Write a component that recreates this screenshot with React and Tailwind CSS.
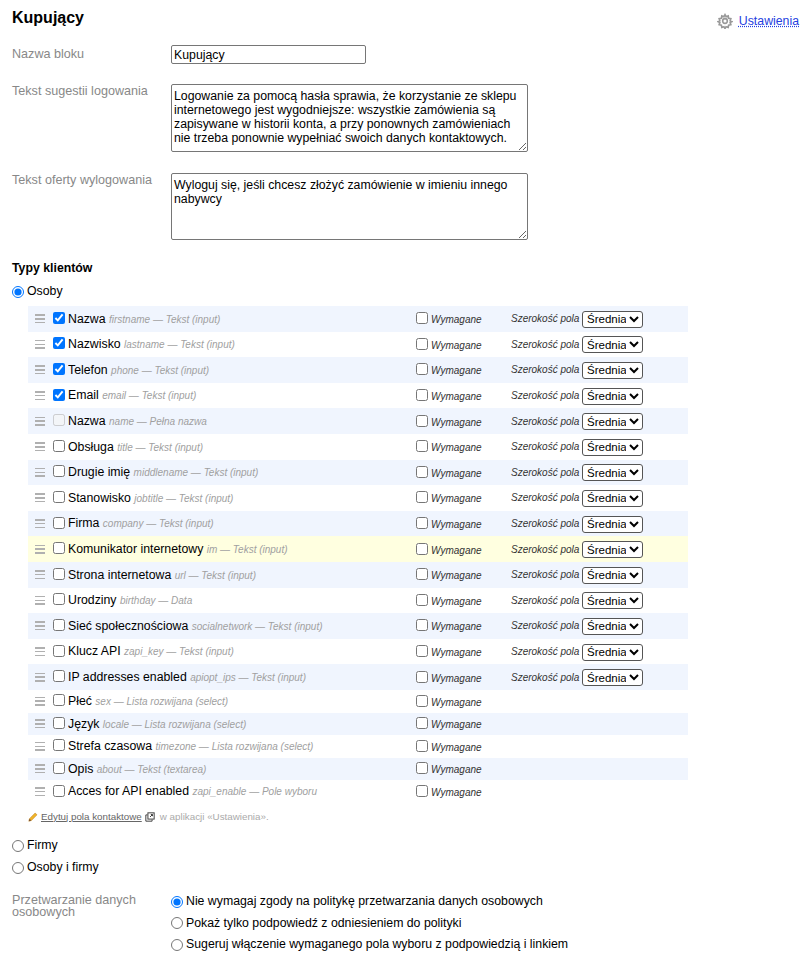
const F = { fontFamily: '"Liberation Sans", Arial, sans-serif' };

const rows = [
  ["Nazwa", "firstname — Tekst (input)", true, true],
  ["Nazwisko", "lastname — Tekst (input)", true, true],
  ["Telefon", "phone — Tekst (input)", true, true],
  ["Email", "email — Tekst (input)", true, true],
  ["Nazwa", "name — Pełna nazwa", false, true, true],
  ["Obsługa", "title — Tekst (input)", false, true],
  ["Drugie imię", "middlename — Tekst (input)", false, true],
  ["Stanowisko", "jobtitle — Tekst (input)", false, true],
  ["Firma", "company — Tekst (input)", false, true],
  ["Komunikator internetowy", "im — Tekst (input)", false, true],
  ["Strona internetowa", "url — Tekst (input)", false, true],
  ["Urodziny", "birthday — Data", false, true],
  ["Sieć społecznościowa", "socialnetwork — Tekst (input)", false, true],
  ["Klucz API", "zapi_key — Tekst (input)", false, true],
  ["IP addresses enabled", "apiopt_ips — Tekst (input)", false, true],
  ["Płeć", "sex — Lista rozwijana (select)", false, false],
  ["Język", "locale — Lista rozwijana (select)", false, false],
  ["Strefa czasowa", "timezone — Lista rozwijana (select)", false, false],
  ["Opis", "about — Tekst (textarea)", false, false],
  ["Acces for API enabled", "zapi_enable — Pole wyboru", false, false],
];

function Row({ r, i }) {
  const [name, meta, checked, select, disabled] = r;
  const bg = i === 9 ? "bg-[#ffffe0]" : i % 2 === 0 ? "bg-[#f0f5fe]" : "bg-white";
  return (
    <div className={`flex items-center w-[660px] ${select ? "h-[25.6px]" : "h-[22.6px]"} ${bg}`}>
      <span className="ml-[7px] w-[10px] h-[9px] flex flex-col justify-between shrink-0">
        <span className="h-[1.5px] bg-[#b0b0b0]" />
        <span className="h-[1.5px] bg-[#b0b0b0]" />
        <span className="h-[1.5px] bg-[#b0b0b0]" />
      </span>
      <input type="checkbox" readOnly checked={checked} disabled={disabled} className="ml-[8px] mr-0 mt-0 mb-[2px] w-[12px] h-[12px] shrink-0" />
      <span className="ml-[3px] w-[348px] shrink-0 truncate text-[12.3px] text-black">
        {name} <i className="text-[10px] text-[#a0a0a0]">{meta}</i>
      </span>
      <input type="checkbox" readOnly className="mx-0 mt-0 mb-[1px] w-[12px] h-[12px] shrink-0" />
      <i className="ml-[3px] mt-[2px] w-[80px] shrink-0 text-[10px] text-[#333333]">Wymagane</i>
      {select && (
        <>
          <i className="text-[10px] text-[#333333] w-[71px] shrink-0 whitespace-nowrap">Szerokość pola</i>
          <select className="w-[61px] h-[17px] mt-[1px] pl-0 pr-0 text-[11.5px] text-black bg-white border border-[#555555] rounded-[3px] appearance-auto" style={F} defaultValue="m">
            <option value="m">Średnia</option>
          </select>
        </>
      )}
    </div>
  );
}

function Radio({ label, checked, name }) {
  return (
    <label className="flex items-center gap-[3px] text-[12.3px] leading-[15px] text-black">
      <input type="radio" name={name} defaultChecked={checked} className="m-0 w-[12px] h-[12px]" />
      {label}
    </label>
  );
}

function Gear() {
  return (
    <svg width="16" height="16" viewBox="0 0 24 24" fill="none" stroke="#999999" strokeWidth="2.4">
      <circle cx="12" cy="12" r="3.5" />
      <path d="M12 2.5l1.6 3 3.2-1.1.6 3.4 3.4.6-1.1 3.2 2.8 1.4-2.8 1.4 1.1 3.2-3.4.6-.6 3.4-3.2-1.1-1.6 3-1.6-3-3.2 1.1-.6-3.4-3.4-.6 1.1-3.2-2.8-1.4 2.8-1.4-1.1-3.2 3.4-.6.6-3.4 3.2 1.1z" />
    </svg>
  );
}

function Field({ label, children, className, labelClass }) {
  return (
    <div className={`flex ${className}`}>
      <div className={`w-[159px] shrink-0 text-[12.6px] leading-[12px] text-[#888888] ${labelClass}`}>{label}</div>
      {children}
    </div>
  );
}

export default function App() {
  return (
    <div className="w-[810px] h-[970px] overflow-hidden bg-white pl-[12px] pt-[9px] text-[12.3px]" style={F}>
      <div className="flex items-center justify-between pr-[11px] h-[18px]">
        <h1 className="text-[16px] font-bold text-black">Kupujący</h1>
        <div className="flex items-center gap-[6px] mt-[5px]">
          <Gear />
          <a className="text-[12.3px] text-[#2440e0] underline decoration-dotted mt-[1px]">Ustawienia</a>
        </div>
      </div>

      <Field label="Nazwa bloku" className="mt-[18px] items-start" labelClass="pt-[3px]">
        <input readOnly value="Kupujący" className="w-[195px] h-[19px] px-[2px] border border-[#767676] rounded-[2px] text-[12.3px] text-black" style={F} />
      </Field>
      <Field label="Tekst sugestii logowania" className="mt-[20px]" labelClass="pt-[1px]">
        <textarea readOnly className="w-[357px] h-[68px] px-[2px] py-[4px] border border-[#767676] rounded-[2px] text-[12.3px] leading-[14px] text-black" style={F}
          value="Logowanie za pomocą hasła sprawia, że korzystanie ze sklepu internetowego jest wygodniejsze: wszystkie zamówienia są zapisywane w historii konta, a przy ponownych zamówieniach nie trzeba ponownie wypełniać swoich danych kontaktowych." />
      </Field>
      <Field label="Tekst oferty wylogowania" className="mt-[21px]" labelClass="pt-[1px]">
        <textarea readOnly className="w-[357px] h-[67px] px-[2px] py-[4px] border border-[#767676] rounded-[2px] text-[12.3px] leading-[14px] text-black" style={F}
          value="Wyloguj się, jeśli chcesz złożyć zamówienie w imieniu innego nabywcy" />
      </Field>

      <div className="mt-[21px] font-bold text-[12.3px] leading-[14px] text-black">Typy klientów</div>
      <div className="mt-[9px]"><Radio label="Osoby" name="t" checked /></div>

      <div className="mt-[7px] ml-[16px]">
        {rows.map((r, i) => <Row key={i} r={r} i={i} />)}
      </div>

      <div className="ml-[16px] mt-[7px] flex items-center h-[14px] text-[9.8px] text-[#aaaaaa]">
        <svg width="10" height="10" viewBox="0 0 12 12" className="mr-[2px]">
          <path d="M1 11l.8-3L8.6 1.2l2.2 2.2L4 10.2z" fill="#f0b429" stroke="#b9770e" strokeWidth=".6" />
          <path d="M1 11l.8-3 2.2 2.2z" fill="#7a5230" />
        </svg>
        <a className="text-[#666666] underline ml-[1px]">Edytuj pola kontaktowe</a>
        <svg width="10" height="10" viewBox="0 0 12 12" fill="none" stroke="#444" strokeWidth="1.2" className="mx-[3px]">
          <rect x="3.5" y="1" width="7.5" height="7.5" />
          <path d="M3 3.5H1V11h7.5V9M6 6l3-3M7 3h2v2" />
        </svg>
        <span className="ml-[2px]">w aplikacji «Ustawienia».</span>
      </div>

      <div className="mt-[14.5px] flex flex-col gap-[7px]">
        <Radio label="Firmy" name="t" />
        <Radio label="Osoby i firmy" name="t" />
      </div>

      <Field label="Przetwarzanie danych osobowych" className="mt-[19px]">
        <div className="flex flex-col gap-[6.5px]">
          <Radio label="Nie wymagaj zgody na politykę przetwarzania danych osobowych" name="p" checked />
          <Radio label="Pokaż tylko podpowiedź z odniesieniem do polityki" name="p" />
          <Radio label="Sugeruj włączenie wymaganego pola wyboru z podpowiedzią i linkiem" name="p" />
        </div>
      </Field>
    </div>
  );
}
